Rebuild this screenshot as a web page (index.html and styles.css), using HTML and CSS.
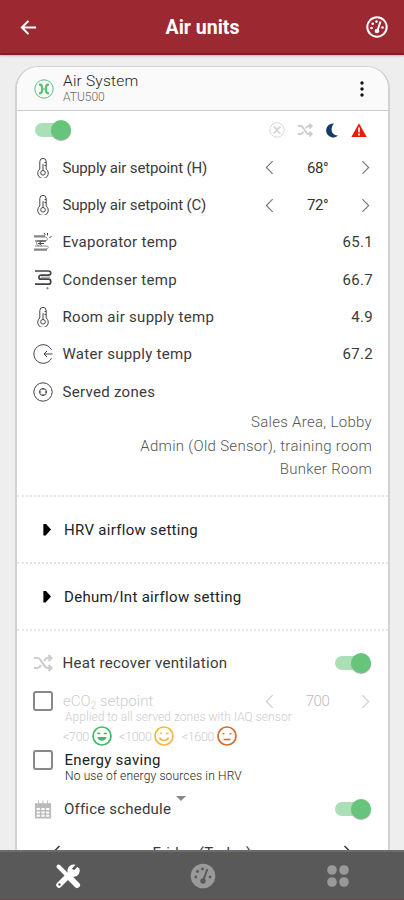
FILE: index.html
```html
<!DOCTYPE html>
<html lang="en">
<head>
<meta charset="utf-8">
<title>Air units</title>
<link rel="stylesheet" href="styles.css">
</head>
<body>
<svg class="defs" aria-hidden="true">
  <symbol id="thermo" viewBox="0 0 20 20"><path d="M6.800 11V3.600a3.200 3.200 0 0 1 6.400 0V11a5.300 5.300 0 1 1-6.400 0z"/><circle cx="10" cy="14.800" r="2.300"/><path d="M10 6v6.500M11.500 4.500H13M11.500 7.500H13"/></symbol>
  <symbol id="shuffle" viewBox="0 0 20 20"><path d="M1 5h3.500c4 0 6 10 10 10H18M1 15h3.500c1.400 0 2.500-1.200 3.500-2.800M11 7.800C12 6.200 13 5 14.500 5H18M15.500 2l3 3-3 3M15.500 12l3 3-3 3"/></symbol>
  <symbol id="left" viewBox="0 0 10 14"><path d="M8.500 0 1.500 7l7 7"/></symbol>
  <symbol id="right" viewBox="0 0 10 14"><path d="m1.500 0 7 7-7 7"/></symbol>
</svg>
<div class="app">
  <header class="topbar">
    <svg class="back" viewBox="0 0 18 18"><path d="M17 9H2M9 2 2 9l7 7"/></svg>
    <h1>Air units</h1>
    <svg class="gauge" viewBox="0 0 22 22"><circle cx="11" cy="11" r="9.700"/><path d="m14.500 5.500-3 9"/><circle class="solid" cx="11" cy="15" r="2.300"/><g class="solid"><circle cx="5.500" cy="12" r="1.300"/><circle cx="6.700" cy="7.800" r="1.300"/><circle cx="10.500" cy="5.600" r="1.300"/><circle cx="16.500" cy="11.500" r="1.300"/></g></svg>
  </header>
  <main class="content">
    <section class="card">
      <div class="card-head">
        <svg class="unit-icon" viewBox="0 0 20 20"><circle cx="10" cy="10" r="9.200"/><path class="blade" d="M5 5.800c2.500-.6 3.300 1.200 3.100 4.200.2 3-.6 4.800-3.100 4.200M15 5.800c-2.500-.6-3.300 1.200-3.100 4.200-.2 3 .6 4.800 3.100 4.200"/><path d="M8 10h4"/></svg>
        <div class="unit"><div class="unit-name">Air System</div><div class="unit-model">ATU500</div></div>
        <svg class="kebab" viewBox="0 0 4 16"><circle cx="2" cy="2" r="1.700"/><circle cx="2" cy="8" r="1.700"/><circle cx="2" cy="14" r="1.700"/></svg>
      </div>
      <div class="status">
        <span class="switch"></span>
        <div class="status-icons">
          <svg class="st faint" viewBox="0 0 20 20"><circle cx="10" cy="10" r="9"/><path class="blade" d="M5.500 6c3 0 6 8 9 8M5.500 14c3 0 6-8 9-8"/></svg>
          <svg class="st shuffle"><use href="#shuffle"/></svg>
          <svg class="st moon" viewBox="0 0 14 16"><path d="M9 1.500a7 7 0 1 0 4 12C6 13.500 4.800 6 9 1.500z"/></svg>
          <svg class="st warn" viewBox="0 0 16 16"><path d="M8 1.300 15.700 15H.3z"/><path class="mark" d="M8 5.500v4.800M8 11.500v1.900"/></svg>
        </div>
      </div>
      <div class="row"><svg class="icon"><use href="#thermo"/></svg><span class="label set">Supply air setpoint (H)</span><div class="stepper"><svg><use href="#left"/></svg><span>68°</span><svg><use href="#right"/></svg></div></div>
      <div class="row"><svg class="icon"><use href="#thermo"/></svg><span class="label set">Supply air setpoint (C)</span><div class="stepper"><svg><use href="#left"/></svg><span>72°</span><svg><use href="#right"/></svg></div></div>
      <div class="row"><svg class="icon" viewBox="0 0 20 20"><path class="soft" d="M1 5h11c3 0 3 4 0 4H6M2 14h11c3 0 3 3 0 3H1M12 9H5c-2 0-2 5 1 5"/><path d="M1 4h11M2 9h11M1 18h13M5 11.500h6M8.500 9.500l-2.500 2 2.500 2M11 1l1.300 2M14.500 1v2.500M18.500 4 16.500 6"/></svg><span class="label">Evaporator temp</span><span class="value">65.1</span></div>
      <div class="row"><svg class="icon" viewBox="0 0 20 20"><path class="coil" d="M2 1h13.500c3 0 3 4.200 0 4.200H8c-2.800 0-2.800 4 0 4h7.500c3 0 3 5 0 5H2"/><path class="soft" d="M8 7.200h9M14.500 17v2.500M13.300 18.200h2.400"/></svg><span class="label">Condenser temp</span><span class="value">66.7</span></div>
      <div class="row"><svg class="icon"><use href="#thermo"/></svg><span class="label">Room air supply temp</span><span class="value">4.9</span></div>
      <div class="row"><svg class="icon" viewBox="0 0 20 20"><path d="M18.500 5.800a9.300 9.300 0 1 0 0 8.400M19.500 10H11M14 7l-3 3 3 3"/></svg><span class="label">Water supply temp</span><span class="value">67.2</span></div>
      <div class="row"><svg class="icon" viewBox="0 0 20 20"><circle cx="10" cy="10" r="9.200"/><circle cx="10" cy="10" r="3.500"/><path d="M10 6v2M10 12v2M6 10h2M12 10h2"/></svg><span class="label">Served zones</span></div>
      <div class="zones"><div>Sales Area, Lobby</div><div>Admin (Old Sensor), training room</div><div>Bunker Room</div></div>
      <div class="fold"><i class="caret"></i><span>HRV airflow setting</span></div>
      <div class="fold"><i class="caret"></i><span>Dehum/Int airflow setting</span></div>
      <div class="settings">
        <div class="row"><svg class="icon shuffle"><use href="#shuffle"/></svg><span class="label">Heat recover ventilation</span><span class="switch end"></span></div>
        <div class="option eco">
          <i class="box"></i>
          <div class="option-body">
            <div class="option-line"><span>eCO<sub>2</sub> setpoint</span><div class="stepper"><svg><use href="#left"/></svg><span>700</span><svg><use href="#right"/></svg></div></div>
            <div class="note eco-note">Applied to all served zones with IAQ sensor</div>
            <div class="levels">
              <span>&lt;700</span><svg class="green" viewBox="0 0 20 20"><circle cx="10" cy="10" r="9"/><path d="M5.500 8q1-1.500 2.500 0M12 8q1.500-1.500 2.500 0"/><path class="mouth" d="M5.500 11h9c-.5 5-8.500 5-9 0z"/></svg>
              <span>&lt;1000</span><svg class="amber" viewBox="0 0 20 20"><circle cx="10" cy="10" r="9"/><path d="M7 6.500v1.500M12 7.500h2.500M5.500 11.500c1.500 4 7.500 4 9 0"/></svg>
              <span>&lt;1600</span><svg class="orange" viewBox="0 0 20 20"><circle cx="10" cy="10" r="9"/><path d="M6.500 7v1.500M13.500 7v1.500M6.500 13.500h7"/></svg>
            </div>
          </div>
        </div>
        <div class="option saving"><i class="box"></i><div class="option-body"><div class="saving-title">Energy saving</div><div class="note saving-note">No use of energy sources in HRV</div></div></div>
        <div class="row schedule"><svg class="icon calendar" viewBox="0 0 20 20"><path d="M1 3h18v17H1z"/><path d="M5 0v4M10 0v4M15 0v4"/><path class="cells" d="M3 9.500h3.500M8.200 9.500h3.600M13.500 9.500H17M3 13.300h3.500M8.200 13.300h3.600M13.500 13.300H17M3 17h3.500M8.200 17h3.600M13.500 17H17"/></svg><span class="label office">Office schedule</span><i class="drop"></i><span class="switch end"></span></div>
        <div class="day"><svg><use href="#left"/></svg><span>Friday (Today)</span><svg><use href="#right"/></svg></div>
      </div>
    </section>
  </main>
  <nav class="tabs">
    <svg class="tools" viewBox="0 0 26 26"><path class="handle" d="m3.500 3.500 8 8"/><path class="grip" d="m15.500 15.500 6.500 6.500"/><path class="wrench" d="m4 22 13-13"/><path class="jaw" d="M22.500 3.800 18.500 8 16.500 6 20.500 1.800A6.200 6.200 0 1 0 24.500 5.800z"/><circle cx="4.500" cy="21.500" r="1.200"/></svg>
    <svg class="dial" viewBox="0 0 26 26"><circle class="face" cx="13" cy="13" r="12.300"/><path d="m17.300 6-3.500 10"/><circle cx="13" cy="18" r="2.700"/><circle cx="5.800" cy="14" r="1.400"/><circle cx="7.500" cy="8.500" r="1.400"/><circle cx="12.500" cy="6" r="1.400"/><circle cx="20" cy="14" r="1.400"/></svg>
    <svg class="dots" viewBox="0 0 22 22"><circle cx="5" cy="5" r="4.800"/><circle cx="17" cy="5" r="4.800"/><circle cx="5" cy="17" r="4.800"/><circle cx="17" cy="17" r="4.800"/></svg>
  </nav>
</div>
</body>
</html>
```

FILE: styles.css
```css
* { box-sizing: border-box; }
body { margin: 0; background: #eee; font-family: Roboto, sans-serif; font-size: 15px; letter-spacing: .3px; color: #3a3a3a; }
svg { display: block; flex: none; fill: none; stroke: currentColor; stroke-width: 1; overflow: visible; }
.defs { position: absolute; width: 0; height: 0; }
.app { display: flex; flex-direction: column; width: 404px; height: 900px; overflow: hidden; }
.topbar { flex: none; display: flex; align-items: center; justify-content: space-between; height: 55px; padding: 0 16px 0 20px; background: #9c2932; border-bottom: 2px solid #8e1824; color: #fff; box-shadow: 0 1px 2px #bbb; }
.topbar h1 { margin: 3px 0 0 2px; font-size: 19.500px; font-weight: 700; line-height: 24px; letter-spacing: 0; }
.back { width: 17px; height: 17px; margin-top: 2px; stroke-width: 2.200; }
.gauge { width: 22px; height: 22px; stroke-width: 2; }
.gauge .solid { fill: #fff; stroke: none; }
.content { flex: 1; min-height: 0; overflow: hidden; padding: 11px 14px 0 15px; }
.card { height: 784px; background: #fff; border: solid #d2d2d2; border-width: 1px 2px 0; border-radius: 23px 23px 0 0; overflow: hidden; }
.card-head { display: flex; align-items: center; height: 44px; padding: 0 24px 0 17px; background: #fafafa; border-bottom: 1px solid #ccc; }
.unit-icon { width: 20px; height: 20px; color: #5abf79; }
.unit-icon .blade { stroke-width: 2.300; }
.unit { flex: 1; padding-left: 9px; }
.unit-name { line-height: 17px; font-weight: 300; font-size: 15.500px; color: #222; letter-spacing: .2px; }
.unit-model { line-height: 14px; font-size: 12px; font-weight: 300; color: #666; letter-spacing: 0; }
.kebab { width: 4px; height: 16px; fill: #111; stroke: none; }
.status { display: flex; align-items: center; justify-content: space-between; height: 38px; padding: 0 21px 0 18px; }
.switch { position: relative; width: 36px; height: 20px; flex: none; }
.switch::before { content: ""; position: absolute; left: 0; top: 3px; width: 30px; height: 14px; border-radius: 7px; background: #abe0b7; }
.switch::after { content: ""; position: absolute; right: 0; top: 0; width: 20px; height: 20px; border-radius: 50%; background: #66c57a; box-shadow: 0 1px 1px #aaa; }
.status-icons { display: flex; align-items: center; gap: 12px; }
.st { width: 16px; height: 16px; }
.shuffle { color: #ccc; stroke-width: 2.200; }
.faint { color: #d5d5d5; stroke-width: 1.200; }
.faint .blade { stroke-width: 2.200; }
.moon { width: 14px; height: 16px; fill: #173b67; stroke: none; }
.warn { fill: #e91c0c; stroke: none; }
.warn .mark { stroke: #fff; stroke-width: 1.700; }
.row { display: flex; align-items: center; height: 37.350px; padding: 0 15px 0 16px; }
.icon { width: 20px; height: 20px; color: #444; }
.icon.shuffle { color: #ccc; }
.soft { color: #888; stroke: #888; }
.coil { stroke-width: 1.700; }
.label { margin-left: 9.500px; white-space: nowrap; }
.set { letter-spacing: -.16px; }
.value { margin-left: auto; }
.stepper { display: flex; align-items: center; margin-left: auto; color: #333; padding-right: 3px; }
.stepper svg { width: 9px; height: 13px; color: #777; stroke-width: 1.300; }
.stepper span { width: 87px; text-align: center; letter-spacing: -.5px; }
.zones { height: 84.600px; padding: 1px 16px 0 0; text-align: right; line-height: 23.500px; font-weight: 300; color: #555; }
.fold { display: flex; align-items: center; height: 67px; padding-left: 25px; border-top: 2px dotted #e5e5e5; color: #222; }
.caret { width: 9px; height: 12px; margin-right: 13px; background: #000; clip-path: polygon(15% 0, 40% 0, 100% 50%, 40% 100%, 15% 100%); }
.settings { border-top: 2px dotted #e5e5e5; padding-top: 13px; }
.end { margin-left: auto; }
.settings .row { padding-right: 17px; }
.option { display: flex; padding-left: 16px; }
.box { width: 20px; height: 20px; flex: none; border: 2px solid #888; border-radius: 3px; }
.option-body { flex: 1; margin-left: 10px; }
.eco { height: 69px; padding-top: 10px; color: #ccc; font-weight: 300; letter-spacing: 0; }
.eco .stepper { color: #bbb; padding-right: 18px; }
.eco .stepper svg { color: #ccc; }
.option-line { display: flex; height: 20px; align-items: center; }
sub { font-size: 10px; line-height: 0; vertical-align: -3px; }
.note { font-size: 12px; line-height: 12px; white-space: nowrap; padding-left: 2px; }
.eco-note { letter-spacing: .04px; }
.levels { display: flex; align-items: center; height: 26px; font-size: 12.500px; letter-spacing: -.3px; }
.levels svg { width: 20px; height: 20px; margin: 0 7.500px 0 2.500px; stroke-width: 1.700; }
.green { color: #42b96b; }
.green .mouth { fill: currentColor; stroke: none; }
.amber { color: #f4b73f; }
.orange { color: #d36a2a; }
.saving { height: 40px; color: #222; }
.saving-title { padding: 1px 0 0 1.500px; line-height: 19px; }
.saving-note { font-weight: 300; color: #222; letter-spacing: .15px; }
.calendar { color: #bbb; width: 18px; height: 19px; margin-left: 1px; }
.cells { stroke: #fff; stroke-width: 2.300; }
.calendar > path:first-child { fill: #bbb; stroke: none; }
.office { margin-left: 12px; letter-spacing: .2px; }
.drop { align-self: flex-start; margin: 6px 0 0 4.500px; border: 5px solid transparent; border-top-color: #888; border-bottom: 0; }
.day { display: flex; justify-content: space-between; padding: 16px 35px 0 34px; line-height: 18px; }
.day svg { width: 10px; height: 20px; margin-top: -1px; stroke-width: 1.500; }
.tabs { flex: none; display: flex; align-items: center; justify-content: space-around; height: 50px; background: #595959; border-top: 2px solid #6c6c6c; border-bottom: 1px solid #704048; color: #999; padding-top: 1px; }
.tools { width: 26px; height: 26px; color: #fff; stroke-linecap: round; }
.handle { stroke-width: 4; }
.grip { stroke-width: 6; }
.wrench { stroke-width: 5.500; }
.jaw { fill: #fff; stroke: none; }
.tools circle { fill: #595959; stroke: none; }
.dial { width: 26px; height: 26px; margin-right: 2px; fill: #595959; stroke: none; }
.dial .face { fill: #999; }
.dial path { stroke: #595959; stroke-width: 2; }
.dots { width: 22px; height: 22px; fill: #999; stroke: none; }
```
